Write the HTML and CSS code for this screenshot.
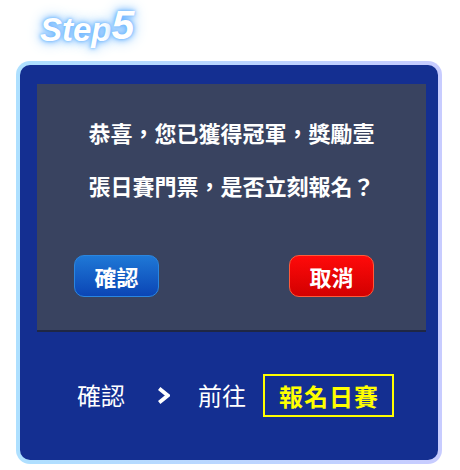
FILE: index.html
```html
<!DOCTYPE html>
<html lang="zh-TW">
<head>
<meta charset="utf-8">
<title>Step5</title>
<link rel="stylesheet" href="styles.css">
</head>
<body>
<div class="page">
  <h1 class="title" lang="en">Step<span class="num">5</span></h1>
  <div class="card">
    <div class="dialog">
      <p class="msg">恭喜，您已獲得冠軍，獎勵壹<br>張日賽門票，是否立刻報名？</p>
      <div class="buttons">
        <button class="btn btn-ok">確認</button>
        <button class="btn btn-cancel">取消</button>
      </div>
    </div>
    <div class="flow">
      <span class="step-text">確認</span>
      <svg class="chev" width="13" height="17" viewBox="0 0 13 17"><polyline points="2.2,1.6 10.8,8.5 2.2,15.4" fill="none" stroke="#ffffff" stroke-width="3.8" stroke-linejoin="miter"/></svg>
      <span class="step-text">前往</span>
      <span class="target">報名日賽</span>
    </div>
  </div>
</div>
</body>
</html>
```

FILE: styles.css
```css
html, body {
  margin: 0;
  padding: 0;
  background: #ffffff;
}

.page {
  width: 460px;
  height: 470px;
  font-family: "Noto Sans CJK TC", "Noto Sans", sans-serif;
}

.title {
  margin: 0;
  height: 61px;
  box-sizing: border-box;
  padding: 6px 0 0 40px;
  font-family: "Liberation Sans", Arial, sans-serif;
  font-style: italic;
  font-weight: bold;
  font-size: 33px;
  line-height: 42px;
  color: #ffffff;
  text-shadow: 0 0 3px #6ab6ff, 0 0 7px #4fa4ff, 0 0 15px #86c4ff;
}

.title .num {
  font-size: 41px;
  position: relative;
  top: -2px;
}

.card {
  margin-left: 16px;
  width: 426px;
  height: 403px;
  box-sizing: border-box;
  border: 4px solid transparent;
  border-radius: 14px;
  background:
    linear-gradient(#142f91, #142f91) padding-box,
    linear-gradient(to right, #aee0ff, #c8ccff) border-box;
  padding: 19px 12px 0 17px;
  display: flex;
  flex-direction: column;
}

.dialog {
  height: 248px;
  box-sizing: border-box;
  background: #394360;
  border-bottom: 2px solid #1f2744;
  display: flex;
  flex-direction: column;
}

.msg {
  margin: 0;
  padding-top: 22px;
  text-align: center;
  color: #ffffff;
  font-size: 22px;
  font-weight: bold;
  line-height: 53px;
}

.buttons {
  margin-top: 43px;
  padding: 0 52px 0 37px;
  display: flex;
  justify-content: space-between;
}

.btn {
  width: 85px;
  height: 42px;
  border-radius: 10px;
  font-family: "Noto Sans CJK TC", "Noto Sans", sans-serif;
  font-size: 22px;
  font-weight: bold;
  color: #ffffff;
  padding: 0;
  line-height: 40px;
}

.btn-ok {
  background: linear-gradient(#1f78d6, #0b45b5);
  border: 1px solid #2a86e0;
}

.btn-cancel {
  background: linear-gradient(#ff0a0a, #d20000);
  border: 1px solid #ff5a3a;
}

.flow {
  flex: 1;
  display: flex;
  align-items: center;
  padding-left: 40px;
  padding-bottom: 2px;
  color: #ffffff;
  font-size: 24px;
}

.step-text {
  line-height: 32px;
}

.chev {
  margin: 0 28px 0 32px;
}

.target {
  margin-left: 17px;
  border: 2px solid #ffff00;
  color: #ffff00;
  font-weight: bold;
  letter-spacing: 1px;
  line-height: 39px;
  padding: 0 13px 0 14px;
}
```
